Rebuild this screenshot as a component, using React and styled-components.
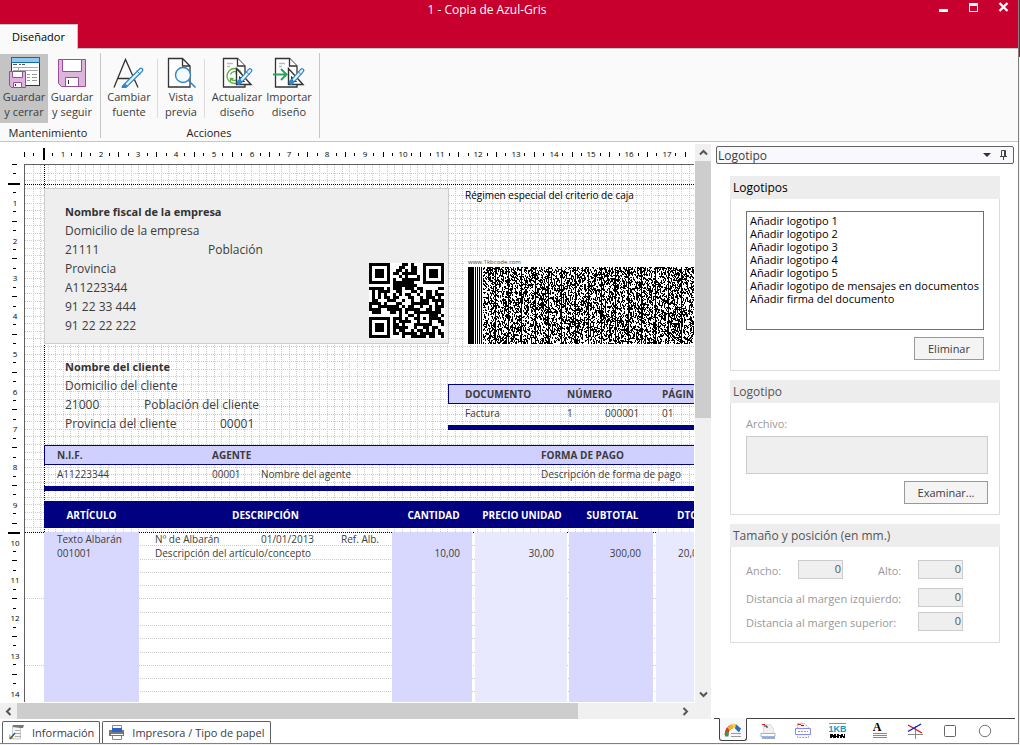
import React, { useState } from "react";
import styled, { createGlobalStyle, css } from "styled-components";

const NAVY = "#000080";
const LINE = "#c6c6c6";
const CM = 37.76;

const GlobalStyle = createGlobalStyle`
  * {
    box-sizing: border-box;
  }
  body {
    margin: 0;
    font-family: "Open Sans", "Noto Sans", sans-serif;
    font-size: 11px;
    color: #3c3c3c;
  }
  button, input, select, textarea {
    font: inherit;
    color: inherit;
    margin: 0;
    padding: 0;
    border-radius: 0;
  }
  svg {
    display: block;
  }
`;

const Desktop = styled.div`
  height: 100vh;
  padding: 0 1px 1px 0;
  background: linear-gradient(#c8002d 57px, #f4f4f4 57px);
`;
const Window = styled.div`
  display: flex;
  flex-direction: column;
  height: 100%;
  background: white;
  border-right: 1px solid #808080;
  border-bottom: 1px solid #808080;
  overflow: hidden;
`;

/* title bar and ribbon */
const Header = styled.header`
  background: #c8002d;
  border-bottom: 1px solid ${LINE};
`;
const TitleBar = styled.div`
  display: flex;
  height: 24px;
  color: white;
`;
const Title = styled.h1`
  flex: 1;
  margin: 0;
  padding-left: 46px;
  font-size: 12px;
  font-weight: 400;
  line-height: 19px;
  text-align: center;
`;
const WindowButtons = styled.div`
  display: flex;
  align-items: flex-start;
`;
const WindowButton = styled.button`
  width: 30px;
  height: 14px;
  padding-left: 10px;
  border: none;
  background: none;
`;
const RibbonTab = styled.button`
  display: block;
  width: 78px;
  height: 25px;
  margin-bottom: -1px;
  border: 1px solid ${LINE};
  border-width: 1px 1px 0 0;
  background: #fafafa;
  color: black;
  line-height: 24px;
`;
const Ribbon = styled.div`
  display: flex;
  height: 93px;
  padding-top: 4px;
  background: #fafafa;
  border-bottom: 1px solid ${LINE};
`;
const RibbonGroup = styled.section`
  display: flex;
  flex-direction: column;
  justify-content: space-between;
  height: 85px;
  border-right: 1px solid ${LINE};
  padding: ${(props) => (props.$inset ? "1px 6px 0 4px" : "1px 4px 0 0")};
`;
const RibbonButtons = styled.div`
  display: flex;
  align-items: center;
`;
const RibbonButton = styled.button`
  display: flex;
  flex-direction: column;
  align-items: center;
  width: ${(props) => props.$width || "48px"};
  height: 69px;
  padding-top: 2px;
  border: none;
  background: ${(props) => (props.$active ? "#c4c4c4" : "none")};
  line-height: 15px;
  white-space: nowrap;
  & svg {
    margin-bottom: 1px;
  }
`;
const RibbonDivider = styled.span`
  width: 1px;
  height: 59px;
  margin: ${(props) => (props.$after ? "0 4px 0 0" : "0 0 0 4px")};
  background: #dcdcdc;
`;
const RibbonCaption = styled.h2`
  margin: 0;
  font-size: 11px;
  font-weight: 400;
  line-height: 11px;
  color: #222;
  text-align: center;
`;

/* work area */
const Body = styled.main`
  display: flex;
  flex: 1;
  min-height: 0;
`;
const Workspace = styled.div`
  display: flex;
  flex-direction: column;
  flex: 1;
  min-width: 0;
`;
const Designer = styled.div`
  display: grid;
  grid-template-columns: 24px minmax(0, 1fr) 16px;
  grid-template-rows: 20px minmax(0, 1fr) 16px;
  flex: 1;
  min-height: 0;
  padding-top: 2px;
`;
const RulerClip = styled.div`
  overflow: hidden;
  grid-area: ${(props) => (props.$vertical ? "1 / 1 / 3 / 2" : "1 / 2 / 2 / 3")};
  & text {
    font-family: "Open Sans", sans-serif;
    font-size: 8px;
    fill: black;
    text-anchor: middle;
  }
`;
const PageClip = styled.div`
  grid-area: 2 / 2 / 3 / 3;
  overflow: hidden;
  border: solid #606060;
  border-width: 1px 0 0 1px;
  margin-right: 1px;
  margin-bottom: 1px;
`;
const Page = styled.div`
  display: grid;
  width: 794px;
  & > * {
    grid-area: 1 / 1;
  }
`;
const PageContent = styled.div`
  padding: 23px 0 0 19px;
`;
const PageRow = styled.div`
  display: flex;
`;
const CompanyBox = styled.div`
  display: flex;
  justify-content: space-between;
  align-items: flex-end;
  width: 405px;
  height: 156px;
  padding: 0 3px 4px 20px;
  background: #eee;
  border: 1px solid #ccc;
`;
const AddressLines = styled.div`
  align-self: flex-start;
  padding-top: 13px;
  font-size: 12px;
  line-height: 19px;
  white-space: nowrap;
`;
const AddressName = styled.div`
  font-size: 11px;
  font-weight: 700;
  color: #333;
`;
const AddressPair = styled.div`
  display: grid;
  grid-template-columns: ${(props) => props.$first} auto;
`;
const SideNotes = styled.div`
  padding-left: 16px;
`;
const TaxNote = styled.div`
  font-size: 10px;
  line-height: 14px;
  color: black;
  white-space: nowrap;
`;
const Barcode = styled.div`
  margin-top: 55px;
  padding: 0 3px;
  background: white;
  font-size: 6px;
  line-height: 10px;
`;
const ClientBox = styled.div`
  width: 404px;
  height: 101px;
  padding-left: 21px;
`;
const FieldTable = styled.table`
  table-layout: fixed;
  width: ${(props) => props.$width};
  border-spacing: 0;
  border-bottom: 5px solid ${NAVY};
  font-size: 10px;
  white-space: nowrap;
  & th {
    height: 20px;
    padding: 0;
    background: #d0d0ff;
    border: solid ${NAVY};
    border-width: 1px 0;
    text-align: left;
  }
  & td {
    height: 21px;
    padding: 0;
    line-height: 18px;
    vertical-align: top;
  }
  & th:first-child {
    border-left-width: 1px;
    padding-left: ${(props) => props.$indent};
  }
  & td:first-child {
    border-left: 1px solid transparent;
    padding-left: ${(props) => props.$indent};
  }
`;
const DocumentSlot = styled.div`
  padding-top: 40px;
`;
const LinesTable = styled.table`
  table-layout: fixed;
  width: 710px;
  margin-top: 10px;
  border-spacing: 0;
  font-size: 10px;
  white-space: nowrap;
  & th {
    height: 31px;
    padding: 0;
    background: ${NAVY};
    background-clip: padding-box;
    border-bottom: 4px solid transparent;
    color: white;
  }
  & th:last-child {
    padding-left: 21px;
    text-align: left;
  }
`;
const Cell = styled.td`
  height: ${(props) => (props.$filler ? "600px" : "14px")};
  padding: 0 ${(props) => props.$right || "0"} 0 ${(props) => props.$left || "0"};
  background: ${(props) => props.$tone || "none"};
  background-clip: padding-box;
  border-right: ${(props) => props.$gap || "0"} solid transparent;
  text-align: ${(props) => (props.$right ? "right" : "left")};
  line-height: 14px;
`;
const NoteLine = styled.div`
  display: grid;
  grid-template-columns: 106px 80px auto;
`;

/* scroll bars */
const ScrollTrack = styled.div`
  display: flex;
  flex-direction: ${(props) => (props.$vertical ? "column" : "row")};
  grid-area: ${(props) => (props.$vertical ? "1 / 3 / 3 / 4" : "3 / 1 / 4 / 4")};
  padding-right: ${(props) => (props.$vertical ? "0" : "17px")};
  background: #f0f0f0;
`;
const ScrollButton = styled.button`
  display: grid;
  place-items: center;
  width: ${(props) => (props.$vertical ? "16px" : "17px")};
  height: ${(props) => (props.$vertical ? "17px" : "16px")};
  border: none;
  background: none;
`;
const ScrollRail = styled.div`
  flex: 1;
  display: flex;
  flex-direction: inherit;
`;
const ScrollThumb = styled.div`
  flex: 0 0 ${(props) => props.$size};
  background: #cdcdcd;
`;

const SheetTabs = styled.div`
  display: flex;
  gap: 2px;
  height: 24px;
  padding: 2px 0 0 2px;
`;
const SheetTab = styled.button`
  display: flex;
  align-items: center;
  gap: 7px;
  padding: 0 5px;
  border: 1px solid #606060;
  border-bottom: none;
  border-radius: 2px 2px 0 0;
  background: white;
  white-space: nowrap;
`;

/* side panel */
const Panel = styled.aside`
  display: flex;
  flex-direction: column;
  width: 307px;
  padding: 4px 3px 1px;
`;
const PanelHeader = styled.div`
  display: flex;
  align-items: center;
  height: 18px;
  margin: 0 1px 0 2px;
  padding: 0 1px;
  border: 1px solid #606060;
  border-radius: 2px;
  background: #f8f8fd;
  font-size: 12px;
  & span {
    flex: 1;
  }
`;
const PanelHeaderButton = styled.button`
  width: 17px;
  height: 14px;
  border: none;
  background: none;
  display: grid;
  place-items: center;
`;
const Groups = styled.div`
  flex: 1;
  display: flex;
  flex-direction: column;
  gap: 9px;
  padding: 12px 15px 0 16px;
`;
const Group = styled.section`
  border: 1px solid #dcdcdc;
  border-top: none;
`;
const GroupTitle = styled.h2`
  margin: 0 -1px;
  padding-left: 3px;
  background: #ededed;
  font-size: 12px;
  font-weight: 400;
  line-height: 23px;
  color: ${(props) => (props.$active ? "black" : "#555")};
`;
const GroupBody = styled.div`
  display: flex;
  flex-direction: column;
  align-items: flex-end;
  padding: ${(props) => props.$pad};
`;
const LogoList = styled.select`
  width: 100%;
  height: 119px;
  padding: 2px 1px;
  border: 1px solid #707070;
  background: white;
  color: black;
  font-size: 11px;
  overflow: hidden;
  & option {
    display: flex;
    align-items: center;
    height: 13px;
    min-height: 13px;
    padding: 0 2px;
  }
`;
const PushButton = styled.button`
  height: 23px;
  width: ${(props) => props.$width};
  margin-top: 7px;
  border: 1px solid #999;
  background: #f4f4f4;
  line-height: 20px;
`;
const FieldLabel = styled.label`
  align-self: ${(props) => (props.$block ? "stretch" : "start")};
  grid-column: span ${(props) => props.$span || 1};
  line-height: 21px;
  color: #999;
  white-space: nowrap;
`;
const FileBox = styled.textarea`
  width: 100%;
  height: 38px;
  margin-top: 2px;
  border: 1px solid #ccc;
  background: #efefef;
  resize: none;
`;
const SizeGrid = styled.div`
  display: grid;
  grid-template-columns: 52px 80px 40px 45px;
  grid-template-rows: 28px 24px 24px;
  padding: 13px 0 6px 15px;
`;
const NumberBox = styled.input`
  width: 45px;
  height: 19px;
  padding: 0 1px 2px;
  border: 1px solid #ccc;
  background: #efefef;
  text-align: right;
  color: #555;
`;
const ToolTabs = styled.nav`
  display: flex;
  height: 24px;
  padding-left: 4px;
  border-top: 1px solid #404040;
`;
const ToolSet = styled.div`
  display: flex;
  & + & {
    margin-left: 7px;
  }
`;
const ToolTab = styled.button`
  display: grid;
  place-items: center;
  width: 35px;
  height: 23px;
  border: none;
  background: none;
  ${(props) =>
    props.$active &&
    css`
      width: 28px;
      margin: -1px 3px 0 1px;
      border: 1px solid #404040;
      border-top-color: #f8f8fd;
      border-radius: 0 0 3px 3px;
      background: #f8f8fd;
    `}
`;

const Pencil = ({ x1, y1, x2, y2 }) => (
  <g strokeLinecap="round">
    <path d={`M${x1} ${y1}L${x1 + 3.5} ${y1 - 3.5}L${x2} ${y2}`} stroke="#2f86c9" strokeWidth="4.6" fill="none" />
    <path d={`M${x1 + 3} ${y1 - 3}L${x2} ${y2}`} stroke="#e4f2fc" strokeWidth="2.4" />
    <path d={`M${x2 - 4} ${y2 + 1}l3 3`} stroke="#2f86c9" />
  </g>
);

const SheetOutline = () => (
  <g fill="white" stroke="#333" strokeWidth="1.3">
    <path d="M2.5 2.5h14l7.5 7.5v21H2.5z" />
    <path d="M16.5 2.5V10H24" />
    <path d="M6 7.5h6M6 10.5h3" stroke="#bbb" />
  </g>
);

const SetSquare = () => (
  <g fill="white" stroke="#333" strokeWidth="1.4">
    <path d="M15.5 12.5V28.5H30z" />
    <path d="M18.5 20.5v5h5z" strokeWidth="1" />
  </g>
);

const Icon = ({ size = 32, children }) => (
  <svg width={size} height={size} viewBox={`0 0 ${size} ${size}`} fill="none" aria-hidden="true">
    {children}
  </svg>
);

const SaveCloseIcon = () => (
  <Icon>
    <rect x="3.5" y="1.5" width="28" height="28" fill="white" stroke="#333" />
    <rect x="3.5" y="1.5" width="28" height="5" fill="#90c8f0" stroke="#1468ac" />
    <path d="M5 8.5h4M11 8.5h2M14 8.5h3" stroke="#555" />
    <path d="M5 11.5h25M10.5 12v3M5 14.5h25" stroke="#aaa" />
    <path d="M19 18.5h3M24 18.5h5M19 21.5h3M24 21.5h5M19 24.5h3M24 24.5h5" stroke="#999" />
    <path d="M1.5 15.5h16v16h-14l-2-2z" fill="#dcb4dc" stroke="#9a4c9a" />
    <path d="M4.5 15.5h10v6h-10zM5.5 26.5h8v5h-8z" fill="white" stroke="#9a4c9a" />
    <path d="M7.5 28v2" stroke="#333" />
  </Icon>
);

const SaveIcon = () => (
  <Icon>
    <path d="M2.5 3.5h27v27h-24l-3-3z" fill="#dcb4dc" stroke="#9a4c9a" />
    <path d="M6.5 3.5h19v12h-19zM9.5 21.5h13v9h-13z" fill="white" stroke="#9a4c9a" />
    <path d="M12.5 24v4" stroke="#333" />
  </Icon>
);

const FontIcon = () => (
  <Icon>
    <path d="M1 31.5L12.5 3.5 25 31.5M5 22.5h15" stroke="#333" strokeWidth="1.3" />
    <Pencil x1={11} y1={31} x2={28} y2={14} />
  </Icon>
);

const PreviewIcon = () => (
  <Icon>
    <path d="M3.5 2.5h14l7.5 7.5v21H3.5zM17.5 2.5V10H25" fill="white" stroke="#333" strokeWidth="1.3" />
    <circle cx="18" cy="19" r="7.5" fill="#f6fbff" stroke="#2f86c9" strokeWidth="1.4" />
    <path d="M23.5 24.5L30.5 31.5" stroke="#2f86c9" strokeWidth="1.6" />
  </Icon>
);

const UpdateIcon = () => (
  <Icon>
    <SheetOutline />
    <circle cx="13.5" cy="20" r="7.5" fill="white" stroke="#5cb044" strokeWidth="1.3" />
    <path
      d="M9.5 18.5c1-3 5-4 7.5-1.5M17.5 14.5v3h-3M17.5 21.5c-1 3-5 4-7.5 1.5M9.5 25.5v-3h3"
      stroke="#5cb044"
      strokeWidth="1.4"
    />
    <SetSquare />
    <Pencil x1={18} y1={26.5} x2={29} y2={14.5} />
  </Icon>
);

const ImportIcon = () => (
  <Icon>
    <SheetOutline />
    <path d="M0 18.5h13M8 13l5.5 5.5L8 24" stroke="#2aa35c" strokeWidth="2" />
    <SetSquare />
    <Pencil x1={18} y1={26.5} x2={29} y2={14.5} />
  </Icon>
);

const Chevron = ({ d }) => (
  <svg width="9" height="9" viewBox="0 0 9 9" fill="none" aria-hidden="true">
    <path d={d} stroke="#555" strokeWidth="2" />
  </svg>
);

const Ruler = ({ vertical, marks, length }) => {
  // where the paper starts, counted from the start of the svg
  const origin = vertical ? 20.5 : 0.5;
  const ticks = [];
  for (let i = 0; i < length * 4; i++) {
    const at = Math.floor(origin + (i * CM) / 4);
    const isMark = marks.includes(i);
    const isNumber = i % 4 === 0 && i > 0;
    if (isNumber && !isMark) {
      ticks.push(
        <text key={i} x={vertical ? 15 : at + 1} y={vertical ? at + 4 : 13}>
          {i / 4}
        </text>
      );
    } else {
      const len = isMark ? 12 : i % 2 ? 3 : 5;
      const thick = isMark ? 2 : 1;
      const from = isMark ? 4 : i % 2 ? 9 : 8;
      ticks.push(
        vertical ? (
          <rect key={i} x={from + 4} y={at} width={len} height={thick} />
        ) : (
          <rect key={i} x={at} y={from} width={thick} height={len} />
        )
      );
    }
  }
  return (
    <svg
      width={vertical ? 24 : length * CM}
      height={vertical ? 20 + length * CM : 20}
      aria-hidden="true"
      shapeRendering="crispEdges"
    >
      {ticks}
    </svg>
  );
};

const PageGrid = () => {
  const step = 7.54;
  const body = 367;
  const lines = [];
  for (let i = 1; i * step < 790; i++) {
    lines.push(`M${Math.round(i * step) + 0.5} 0V${body}`);
  }
  for (let i = 1; i * step < body; i++) {
    lines.push(`M0 ${Math.round(i * step) + 0.5}H794`);
  }
  for (let i = 1; i < 40; i++) {
    lines.push(`M${i % 5 === 0 ? 0 : 115} ${Math.round(body + i * 13.28) + 0.5}H794`);
  }
  return (
    <svg width="794" height="900" fill="none" aria-hidden="true" shapeRendering="crispEdges">
      <path d={lines.join("")} stroke="#ccc" strokeDasharray="1 1" />
      <path d={`M19.5 0V${body}M0 19.5H794M0 ${body + 0.5}H794`} stroke="black" strokeDasharray="1 1" />
    </svg>
  );
};

const noise = (seed) => {
  let s = seed;
  return () => {
    s = (s * 16807) % 2147483647;
    return s / 2147483647;
  };
};

const QrCode = () => {
  const next = noise(2113);
  const cells = [];
  const inFinder = (x, y) => (x < 8 && y < 8) || (x > 16 && y < 8) || (x < 8 && y > 16);
  const inAlign = (x, y) => x > 15 && x < 21 && y > 15 && y < 21;
  for (let y = 0; y < 25; y++) {
    for (let x = 0; x < 25; x++) {
      if (next() > 0.46 && !inFinder(x, y) && !inAlign(x, y)) cells.push(`M${x} ${y}h1v1h-1z`);
    }
  }
  const finder = (x, y) => `M${x} ${y}h7v7h-7zM${x + 1} ${y + 1}v5h5v-5zM${x + 2} ${y + 2}h3v3h-3z`;
  const align = "M16 16h5v5h-5zM17 17v3h3v-3zM18 18h1v1h-1z";
  return (
    <svg width="76" height="76" viewBox="0 0 76 76" shapeRendering="crispEdges" role="img" aria-label="QR">
      <rect width="76" height="76" fill="white" />
      <path transform="scale(3)" d={cells.join("") + finder(0, 0) + finder(18, 0) + finder(0, 18) + align} />
    </svg>
  );
};

const KbCode = () => {
  const next = noise(771);
  const bars = ["M0 0h6v77H0z", "M7 0h1v77h-1z", "M9 0h1v77h-1z", "M11 0h1v77h-1z"];
  const guards = [];
  for (let i = 1; i < 24; i++) guards.push(Math.round(i * 13.33));
  guards.forEach((x) => bars.push(`M${x} 0h1v77h-1z`));
  for (let x = 15; x < 310; x++) {
    if (guards.includes(x)) continue;
    let y = 0;
    while (y < 77) {
      const h = Math.min(next() > 0.5 ? 2 : 1, 77 - y);
      if (next() > 0.5) bars.push(`M${x} ${y}h${next() > 0.8 ? 2 : 1}v${h}h-1z`);
      y += h;
    }
  }
  return (
    <svg width="310" height="77" shapeRendering="crispEdges" role="img" aria-label="1KB">
      <path d={bars.join("")} />
    </svg>
  );
};

const DARK = "#d8d8ff";
const LIGHT = "#e8e8ff";

const logoOptions = [
  "Añadir logotipo 1",
  "Añadir logotipo 2",
  "Añadir logotipo 3",
  "Añadir logotipo 4",
  "Añadir logotipo 5",
  "Añadir logotipo de mensajes en documentos",
  "Añadir firma del documento",
];

const RibbonItem = ({ icon, lines, ...rest }) => (
  <RibbonButton {...rest}>
    {icon}
    <span>{lines[0]}</span>
    <span>{lines[1]}</span>
  </RibbonButton>
);

const InvoicePage = () => (
  <Page>
    <PageGrid />
    <PageContent>
      <PageRow>
        <CompanyBox>
          <AddressLines>
            <AddressName>Nombre fiscal de la empresa</AddressName>
            <div>Domicilio de la empresa</div>
            <AddressPair $first="143px">
              <span>21111</span>
              <span>Población</span>
            </AddressPair>
            <div>Provincia</div>
            <div>A11223344</div>
            <div>91 22 33 444</div>
            <div>91 22 22 222</div>
          </AddressLines>
          <QrCode />
        </CompanyBox>
        <SideNotes>
          <TaxNote>Régimen especial del criterio de caja</TaxNote>
          <Barcode>
            www.1kbcode.com
            <KbCode />
          </Barcode>
        </SideNotes>
      </PageRow>
      <PageRow>
        <ClientBox>
          <AddressLines>
            <AddressName>Nombre del cliente</AddressName>
            <div>Domicilio del cliente</div>
            <AddressPair $first="79px">
              <span>21000</span>
              <span>Población del cliente</span>
            </AddressPair>
            <AddressPair $first="155px">
              <span>Provincia del cliente</span>
              <span>00001</span>
            </AddressPair>
          </AddressLines>
        </ClientBox>
        <DocumentSlot>
          <FieldTable $width="306px" $indent="16px">
            <colgroup>
              <col width="119" />
              <col width="38" />
              <col width="57" />
              <col />
            </colgroup>
            <thead>
              <tr>
                <th>DOCUMENTO</th>
                <th colSpan="2">NÚMERO</th>
                <th>PÁGINA</th>
              </tr>
            </thead>
            <tbody>
              <tr>
                <td>Factura</td>
                <td>1</td>
                <td>000001</td>
                <td>01</td>
              </tr>
            </tbody>
          </FieldTable>
        </DocumentSlot>
      </PageRow>
      <FieldTable $width="710px" $indent="12px">
        <colgroup>
          <col width="168" />
          <col width="49" />
          <col width="280" />
          <col />
        </colgroup>
        <thead>
          <tr>
            <th>N.I.F.</th>
            <th colSpan="2">AGENTE</th>
            <th>FORMA DE PAGO</th>
          </tr>
        </thead>
        <tbody>
          <tr>
            <td>A11223344</td>
            <td>00001</td>
            <td>Nombre del agente</td>
            <td>Descripción de forma de pago</td>
          </tr>
        </tbody>
      </FieldTable>
      <LinesTable>
        <colgroup>
          <col width="95" />
          <col width="253" />
          <col width="83" />
          <col width="94" />
          <col width="87" />
          <col />
        </colgroup>
        <thead>
          <tr>
            <th>ARTÍCULO</th>
            <th>DESCRIPCIÓN</th>
            <th>CANTIDAD</th>
            <th>PRECIO UNIDAD</th>
            <th>SUBTOTAL</th>
            <th>DTO.</th>
          </tr>
        </thead>
        <tbody>
          <tr>
            <Cell $tone={DARK} $left="13px">Texto Albarán</Cell>
            <Cell $left="16px">
              <NoteLine>
                <span>Nº de Albarán</span>
                <span>01/01/2013</span>
                <span>Ref. Alb.</span>
              </NoteLine>
            </Cell>
            <Cell $tone={DARK} $gap="3px" />
            <Cell $tone={LIGHT} $gap="2px" />
            <Cell $tone={DARK} $gap="3px" />
            <Cell $tone={LIGHT} />
          </tr>
          <tr>
            <Cell $tone={DARK} $left="13px">001001</Cell>
            <Cell $left="16px">Descripción del artículo/concepto</Cell>
            <Cell $tone={DARK} $gap="3px" $right="12px">10,00</Cell>
            <Cell $tone={LIGHT} $gap="2px" $right="13px">30,00</Cell>
            <Cell $tone={DARK} $gap="3px" $right="12px">300,00</Cell>
            <Cell $tone={LIGHT} $left="22px">20,00</Cell>
          </tr>
          <tr>
            <Cell $filler $tone={DARK} />
            <Cell $filler />
            <Cell $filler $tone={DARK} $gap="3px" />
            <Cell $filler $tone={LIGHT} $gap="2px" />
            <Cell $filler $tone={DARK} $gap="3px" />
            <Cell $filler $tone={LIGHT} />
          </tr>
        </tbody>
      </LinesTable>
    </PageContent>
  </Page>
);

const toolIcons = [
  [
    {
      name: "Logotipo",
      art: (
        <>
          <path d="M2.5 14c0-4 2-8 6-8.500" stroke="#d8382c" strokeWidth="4" />
          <path d="M1 10.5v5h3.500v-5" fill="#2f9e44" />
          <path d="M4.5 8L9 4.5" stroke="#f2b61c" strokeWidth="4" />
          <path d="M9 4.500c2 0 3 .5 4 2" stroke="#f2d33c" strokeWidth="4" />
          <path d="M12 3.500l5 4-2 4-4-4z" fill="#2a6cc4" />
          <path d="M7 12.500h10M7 15.500h10" stroke="#999" />
        </>
      ),
    },
    {
      name: "Pie",
      art: (
        <>
          <path d="M4.500 2.500h7l3 4v8h-10z" fill="#f0f0f0" stroke="#ddd" />
          <path d="M3 2.500h3" stroke="#d22" />
          <path d="M5 4h3v2" stroke="#224" />
          <path d="M2 11.500h14v3H2z" fill="white" stroke="#8db8e8" />
          <path d="M3 16h13" stroke="#aaa" strokeWidth="2" />
        </>
      ),
    },
    {
      name: "Cuerpo",
      art: (
        <>
          <path d="M3.500 1.500h7l4 4v10h-11z" fill="#f6f6f6" stroke="#aaa" strokeDasharray="2 1" />
          <path d="M4 2.500h3" stroke="#d22" />
          <path d="M7 3.500h3" stroke="#22c" />
          <path d="M1.500 6.500h15v6h-15z" fill="white" stroke="#8a8af4" />
          <path d="M4 9.500h10" stroke="#8a8af4" strokeDasharray="2 1" />
        </>
      ),
    },
    {
      name: "Código",
      art: (
        <>
          <path d="M0 1.500h17" stroke="#28b4e8" />
          <text
            x="8.500"
            y="10"
            fontSize="9"
            fontWeight="700"
            fontFamily="Liberation Sans, sans-serif"
            textAnchor="middle"
            fill="#1796bd"
          >
            1KB
          </text>
          <path d="M1 12h3v1h1v-1h2v2h1v-2h2v1h2v-1h2v2h1v-2h1v4h-2v-1h-1v1h-2v-2h-1v2H8v-1H7v1H4v-1H3v1H1z" fill="black" />
        </>
      ),
    },
  ],
  [
    {
      name: "Texto",
      art: (
        <>
          <text
            x="6"
            y="9"
            fontSize="12"
            fontWeight="700"
            fontFamily="Liberation Serif, serif"
            textAnchor="middle"
            fill="black"
          >
            A
          </text>
          <path d="M2 11.500h14M2 13.500h14M2 15.500h14" stroke="#888" />
        </>
      ),
    },
    {
      name: "Líneas",
      art: (
        <>
          <path d="M2 12.500h15M9.500 4v13" stroke="#888" />
          <path d="M2 3l14 8" stroke="#d11" strokeWidth="1.300" />
          <path d="M2 9.500L15 2" stroke="#11d" strokeWidth="1.300" />
        </>
      ),
    },
    { name: "Recuadro", art: <rect x="3.500" y="3.500" width="11" height="11" rx="1" stroke="#666" /> },
    { name: "Círculo", art: <circle cx="9" cy="9" r="5.700" stroke="#777" /> },
  ],
];

const App = () => {
  const [ancho, setAncho] = useState("0");
  const [alto, setAlto] = useState("0");
  const [izquierdo, setIzquierdo] = useState("0");
  const [superior, setSuperior] = useState("0");

  return (
    <Desktop>
      <GlobalStyle />
      <Window>
        <Header>
          <TitleBar>
            <Title>1 - Copia de Azul-Gris</Title>
            <WindowButtons>
              <WindowButton aria-label="Minimizar">
                <svg width="12" height="13">
                  <path d="M1 8h9v3H1z" fill="white" />
                </svg>
              </WindowButton>
              <WindowButton aria-label="Maximizar">
                <svg width="12" height="13">
                  <path d="M1 2h9v9H1zM2 5v5h7V5z" fill="white" fillRule="evenodd" />
                </svg>
              </WindowButton>
              <WindowButton aria-label="Cerrar">
                <svg width="12" height="13">
                  <path d="M1.5 2l8 8M9.5 2l-8 8" stroke="white" strokeWidth="2.4" />
                </svg>
              </WindowButton>
            </WindowButtons>
          </TitleBar>
          <RibbonTab>Diseñador</RibbonTab>
        </Header>

        <Ribbon>
          <RibbonGroup>
            <RibbonButtons>
              <RibbonItem $active icon={<SaveCloseIcon />} lines={["Guardar", "y cerrar"]} />
              <RibbonItem icon={<SaveIcon />} lines={["Guardar", "y seguir"]} />
            </RibbonButtons>
            <RibbonCaption>Mantenimiento</RibbonCaption>
          </RibbonGroup>
          <RibbonGroup $inset>
            <RibbonButtons>
              <RibbonItem icon={<FontIcon />} lines={["Cambiar", "fuente"]} />
              <RibbonDivider />
              <RibbonItem $width="46px" icon={<PreviewIcon />} lines={["Vista", "previa"]} />
              <RibbonDivider $after />
              <RibbonItem $width="56px" icon={<UpdateIcon />} lines={["Actualizar", "diseño"]} />
              <RibbonItem icon={<ImportIcon />} lines={["Importar", "diseño"]} />
            </RibbonButtons>
            <RibbonCaption>Acciones</RibbonCaption>
          </RibbonGroup>
        </Ribbon>

        <Body>
          <Workspace>
            <Designer>
              <RulerClip>
                <Ruler marks={[2]} length={17.75} />
              </RulerClip>
              <RulerClip $vertical>
                <Ruler vertical marks={[2, 39]} length={14.25} />
              </RulerClip>
              <PageClip>
                <InvoicePage />
              </PageClip>
              <ScrollTrack $vertical>
                <ScrollButton $vertical aria-label="Subir">
                  <Chevron d="M1 6.5L4.5 3 8 6.5" />
                </ScrollButton>
                <ScrollRail>
                  <ScrollThumb $size="49%" />
                </ScrollRail>
                <ScrollButton $vertical aria-label="Bajar">
                  <Chevron d="M1 2.5L4.5 6 8 2.5" />
                </ScrollButton>
              </ScrollTrack>
              <ScrollTrack>
                <ScrollButton aria-label="Izquierda">
                  <Chevron d="M6.5 1L3 4.5 6.5 8" />
                </ScrollButton>
                <ScrollRail>
                  <ScrollThumb $size="85%" />
                </ScrollRail>
                <ScrollButton aria-label="Derecha">
                  <Chevron d="M2.5 1L6 4.5 2.5 8" />
                </ScrollButton>
              </ScrollTrack>
            </Designer>
            <SheetTabs>
              <SheetTab>
                <Icon size={17}>
                  <path d="M5 1h11l-1 3H4z" fill="#777" />
                  <path d="M4.5 3v12h8V4" fill="#f6f6f6" stroke="#ccc" />
                  <path d="M7 6.5h5M7 9.5h6M7 12.5h6" stroke="#aaa" />
                  <path d="M1 10v5h5z" fill="#f2b445" />
                  <path d="M2 15l5-6" stroke="#2d5f8b" strokeWidth="1.5" />
                </Icon>
                Información
              </SheetTab>
              <SheetTab>
                <Icon size={17}>
                  <path d="M4.5 4V1.5h9V4M4.5 12v3.5h9V12" fill="white" stroke="#888" />
                  <path d="M1 6h3V4h10v2h2v6H1z" fill="#777" />
                  <path d="M4 4h10v4H4z" fill="#2c62d0" />
                  <path d="M3 10.5h12" stroke="white" />
                </Icon>
                Impresora / Tipo de papel
              </SheetTab>
            </SheetTabs>
          </Workspace>

          <Panel>
            <PanelHeader>
              <span>Logotipo</span>
              <PanelHeaderButton aria-label="Menú">
                <svg width="8" height="5">
                  <path d="M0 0h8L4 4z" fill="#333" />
                </svg>
              </PanelHeaderButton>
              <PanelHeaderButton aria-label="Fijar">
                <svg width="9" height="11" fill="none" stroke="#444">
                  <path d="M2.5 6V.5h4V6M5.5 1v5M1 6.5h7M4.5 7v3" />
                </svg>
              </PanelHeaderButton>
            </PanelHeader>

            <Groups>
              <Group>
                <GroupTitle $active id="logos">Logotipos</GroupTitle>
                <GroupBody $pad="12px 15px 10px">
                  <LogoList size="7" aria-labelledby="logos">
                    {logoOptions.map((name) => (
                      <option key={name}>{name}</option>
                    ))}
                  </LogoList>
                  <PushButton $width="70px">Eliminar</PushButton>
                </GroupBody>
              </Group>
              <Group>
                <GroupTitle>Logotipo</GroupTitle>
                <GroupBody $pad="10px 11px 10px 15px">
                  <FieldLabel $block htmlFor="archivo">Archivo:</FieldLabel>
                  <FileBox id="archivo" disabled />
                  <PushButton $width="84px">Examinar...</PushButton>
                </GroupBody>
              </Group>
              <Group>
                <GroupTitle>Tamaño y posición (en mm.)</GroupTitle>
                <SizeGrid>
                  <FieldLabel htmlFor="ancho">Ancho:</FieldLabel>
                  <NumberBox id="ancho" value={ancho} onChange={(e) => setAncho(e.target.value)} />
                  <FieldLabel htmlFor="alto">Alto:</FieldLabel>
                  <NumberBox id="alto" value={alto} onChange={(e) => setAlto(e.target.value)} />
                  <FieldLabel $span={3} htmlFor="izquierdo">Distancia al margen izquierdo:</FieldLabel>
                  <NumberBox id="izquierdo" value={izquierdo} onChange={(e) => setIzquierdo(e.target.value)} />
                  <FieldLabel $span={3} htmlFor="superior">Distancia al margen superior:</FieldLabel>
                  <NumberBox id="superior" value={superior} onChange={(e) => setSuperior(e.target.value)} />
                </SizeGrid>
              </Group>
            </Groups>

            <ToolTabs>
              {toolIcons.map((set, i) => (
                <ToolSet key={i}>
                  {set.map((tool) => (
                    <ToolTab key={tool.name} aria-label={tool.name} $active={tool.name === "Logotipo"}>
                      <Icon size={18}>{tool.art}</Icon>
                    </ToolTab>
                  ))}
                </ToolSet>
              ))}
            </ToolTabs>
          </Panel>
        </Body>
      </Window>
    </Desktop>
  );
};
export default App;
